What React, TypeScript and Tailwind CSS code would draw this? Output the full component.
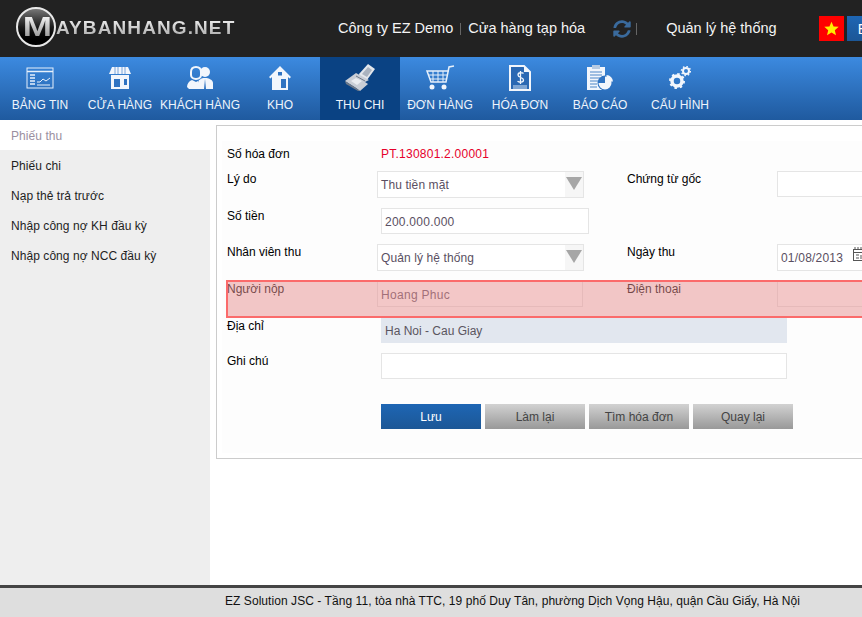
import { FaSyncAlt } from "react-icons/fa";

const menu = [
  { label: "BẢNG TIN", icon: <DashIcon /> },
  { label: "CỬA HÀNG", icon: <StoreIcon /> },
  { label: "KHÁCH HÀNG", icon: <UsersIcon /> },
  { label: "KHO", icon: <HomeIcon /> },
  { label: "THU CHI", icon: <MoneyIcon />, active: true },
  { label: "ĐƠN HÀNG", icon: <CartIcon /> },
  { label: "HÓA ĐƠN", icon: <InvoiceIcon /> },
  { label: "BÁO CÁO", icon: <ReportIcon /> },
  { label: "CẤU HÌNH", icon: <GearsIcon /> },
];

const sideItems = ["Phiếu chi", "Nạp thẻ trả trước", "Nhập công nợ KH đầu kỳ", "Nhập công nợ NCC đầu kỳ"];

function DashIcon() {
  return (
    <svg width="28" height="22" viewBox="0 0 28 22" fill="none" stroke="#e6f0fb">
      <rect x="1" y="1" width="26" height="20" strokeWidth="1" />
      <path d="M1 4.500h26" strokeWidth="1.500" />
      <path d="M4 8h5M4 11h5M4 14h5M4 17h5" strokeWidth="1.500" />
      <path d="M11 15h3l3-3 3 2 4-3" strokeWidth="1" />
      <path d="M11 18h13" strokeWidth="1" />
    </svg>
  );
}

function StoreIcon() {
  return (
    <svg width="22" height="22" viewBox="0 0 22 22" fill="#f2f6fc">
      <path d="M3 0h16l3 7H0z" />
      <path d="M6 0v7M9 0v7M13 0v7M16 0v7" stroke="#5b93d3" strokeWidth="0.800" />
      <path d="M2 8h18v14H2z" />
      <rect x="5" y="12" width="9" height="8" fill="#2f73c2" />
      <rect x="11" y="12" width="3" height="10" fill="#f2f6fc" />
      <rect x="15" y="12" width="3" height="6" fill="#2f73c2" />
    </svg>
  );
}

function UsersIcon() {
  return (
    <svg width="26" height="24" viewBox="0 0 26 24" fill="#f2f6fc">
      <circle cx="18" cy="6" r="5" />
      <path d="M11 23v-6c0-3 3-5 7-5s8 2 8 5v6z" />
      <path d="M18 13l-1 10h2z" fill="#2f73c2" />
      <path d="M4 6c0-3 2-5 5-5s5 2 5 5v3c0 2-2 4-5 4S4 11 4 9z" fill="none" stroke="#f2f6fc" strokeWidth="2" />
      <path d="M0 21c0-3 2-6 5-7l4 2 2-1v8H2z" />
    </svg>
  );
}

function HomeIcon() {
  return (
    <svg width="22" height="24" viewBox="0 0 22 24" fill="#f2f6fc">
      <path d="M11 0L0 11l1.500 1.500L3 11v13h16V11l1.500 1.500L22 11z" />
      <rect x="12" y="13" width="5" height="9" fill="#2f73c2" />
      <rect x="9" y="6" width="4" height="3.500" fill="#2f73c2" />
    </svg>
  );
}

function MoneyIcon() {
  return (
    <svg width="30" height="27" viewBox="0 0 30 27">
      <path d="M14 10L23 0l7 5-8 11-7-2z" fill="#e3e7ec" />
      <path d="M17 10l6-7 4 3-5 7z" fill="#aab3bf" />
      <path d="M0 17L11 9l13 7-4 2 3 2-8 7-4-3z" fill="#c9ced6" />
      <path d="M6 17l5-3 6 3-5 4z" fill="#e9ecf0" />
      <path d="M0 17l11 7 4 3-2 0-12-7z" fill="#6f7a89" />
      <path d="M11 12l9 5" stroke="#6f7a89" strokeWidth="1" />
    </svg>
  );
}

function CartIcon() {
  return (
    <svg width="30" height="26" viewBox="0 0 30 26" fill="none" stroke="#e6f0fb">
      <path d="M29 1l-5 1-3 15H6L2 6h22" strokeWidth="1.500" />
      <path d="M3 10h19M5 14h16M8 6v11M13 6v11M18 6v11" strokeWidth="1" />
      <circle cx="7" cy="22" r="2.500" fill="#f2f6fc" stroke="none" />
      <circle cx="19" cy="22" r="2.500" fill="#f2f6fc" stroke="none" />
    </svg>
  );
}

function InvoiceIcon() {
  return (
    <svg width="22" height="26" viewBox="0 0 22 26" fill="none">
      <path d="M2 1h13l6 6v18H1V1z" stroke="#f2f6fc" strokeWidth="2" fill="#2a68b3" />
      <path d="M15 1v6h6z" fill="#f2f6fc" />
      <path d="M4 21h14M4 23h14" stroke="#e6f0fb" strokeWidth="0.900" />
      <path d="M14.500 8.500c-1-1-5.500-1.500-5.500 1.500s5.500 2 5.500 5-4.500 2.500-6 1.300M11.500 6v13" stroke="#f2f6fc" strokeWidth="1.300" />
    </svg>
  );
}

function ReportIcon() {
  return (
    <svg width="28" height="26" viewBox="0 0 28 26">
      <rect x="1" y="2" width="18" height="23" fill="#f2f6fc" />
      <rect x="6" y="0" width="8" height="4" fill="#b8cbe2" />
      <path d="M4 7h12M4 10h12M4 13h10M4 16h8M4 19h7M4 22h7" stroke="#4d86c7" strokeWidth="1" />
      <circle cx="19" cy="18" r="7.500" fill="#2f73c2" />
      <path d="M19 18v-6.500a6.500 6.500 0 1 1-6.500 6.500z" fill="#f2f6fc" />
      <path d="M20.500 16.500V10a7 7 0 0 1 6.500 6.500z" fill="#f2f6fc" />
    </svg>
  );
}

function GearsIcon() {
  return (
    <svg width="22" height="24" viewBox="0 0 22 24" fill="none" stroke="#f2f6fc">
      <circle cx="8" cy="15" r="5" strokeWidth="3.500" />
      <circle cx="8" cy="15" r="7" strokeWidth="2" strokeDasharray="2.500 3" />
      <circle cx="17" cy="5" r="3" strokeWidth="2" />
      <circle cx="17" cy="5" r="4.500" strokeWidth="1.500" strokeDasharray="1.500 2" />
    </svg>
  );
}

function SelectBox({ value }: { value: string }) {
  return (
    <div className="flex h-[27px] w-[207px] items-center border border-[#e5e5e5] bg-white pl-[3px] tracking-[0.1px] text-[#5a4f62]">
      <span className="flex-1">{value}</span>
      <span className="flex h-full w-[18px] items-start justify-center bg-[#f6f6f6] pt-[5px]">
        <span className="h-0 w-0 border-x-[8px] border-t-[13px] border-x-transparent border-t-[#a6a6a6]" />
      </span>
    </div>
  );
}

function Row({ label, className, children }: { label: string; className?: string; children: React.ReactNode }) {
  return (
    <div className={"flex " + (className ?? "")}>
      <label className="w-[150px] shrink-0 leading-[16px] text-black">{label}</label>
      {children}
    </div>
  );
}

export default function App() {
  return (
    <div className="relative flex h-[617px] w-[862px] flex-col overflow-hidden bg-white font-['Liberation_Sans',Arial,sans-serif] text-xs">
      <header className="flex h-[57px] shrink-0 items-center whitespace-nowrap bg-[#222222]">
        <div className="ml-[16px] flex w-[322px] shrink-0 items-center">
          <div className="mt-[-3px] flex h-[40px] w-[40px] shrink-0 items-center justify-center rounded-full border-2 border-[#e8e8e8] bg-gradient-to-b from-[#777777] via-[#1c1c1c] to-black">
            <span className="translate-x-[1px] scale-x-[1.3] bg-gradient-to-b from-white to-[#8a8a8a] bg-clip-text text-[27px] font-bold leading-none text-transparent">M</span>
          </div>
          <span className="mt-[-2px] bg-gradient-to-b from-white to-[#a0a0a0] bg-clip-text text-[19px] font-bold tracking-[1.1px] text-transparent">AYBANHANG.NET</span>
        </div>
        <span className="shrink-0 text-[14.5px] text-[#f4f4f4]">Công ty EZ Demo</span>
        <span className="mx-[7px] h-[12px] w-px shrink-0 bg-[#666666]" />
        <span className="shrink-0 text-[14.5px] text-[#f4f4f4]">Cửa hàng tạp hóa</span>
        <FaSyncAlt className="ml-[28px] shrink-0 text-[18px] text-[#3a6a9c]" />
        <span className="ml-[5px] h-[12px] w-px shrink-0 bg-[#666666]" />
        <span className="ml-[29px] shrink-0 text-[14.5px] text-[#f4f4f4]">Quản lý hệ thống</span>
        <div className="ml-[42px] flex h-[25px] w-[25px] shrink-0 items-center justify-center bg-[#ff0000]">
          <svg width="15" height="15" viewBox="0 0 24 24"><path d="M12 1l3.300 7.600 8.200.7-6.200 5.400 1.900 8L12 18.500 4.800 22.700l1.900-8L.5 9.300l8.200-.7z" fill="#ffee00" /></svg>
        </div>
        <div className="ml-[3px] flex h-[25px] w-[40px] shrink-0 items-center bg-gradient-to-b from-[#1e66b4] to-[#1c5796] pl-[11px] text-sm text-white">EN</div>
      </header>

      <nav className="flex h-[63px] shrink-0 bg-gradient-to-b from-[#3c8ae0] to-[#1f5a9f]">
        {menu.map((m) => (
          <div key={m.label} className={"flex w-[80px] shrink-0 flex-col items-center pt-[7px] " + (m.active ? "bg-[#0a4283]" : "")}>
            <div className="flex h-[27px] items-center">{m.icon}</div>
            <span className="mt-[6px] whitespace-nowrap text-xs text-[#eef4fb]">{m.label}</span>
          </div>
        ))}
      </nav>

      <main className="flex min-h-0 flex-1">
        <aside className="w-[210px] shrink-0 bg-[#eeeeee] tracking-[0.06px]">
          <div className="flex h-[30px] items-center bg-white pl-[11px] pt-px text-[#9a8f9f]">Phiếu thu</div>
          {sideItems.map((s) => (
            <div key={s} className="flex h-[30px] items-center pl-[11px] pt-px text-[#1e1e1e]">{s}</div>
          ))}
        </aside>
        <section className="ml-[6px] mt-[5px] h-[334px] w-[700px] shrink-0 border border-[#cccccc] bg-white pb-[5px] pl-[5px] pt-[15px]">
          <div className="h-full bg-[#fdfdfd] pl-[5px]">
            <div className="mb-[4px] flex h-[26px] items-center text-black">
              <label className="w-[154px] shrink-0">Số hóa đơn</label>
              <span className="tracking-[0.24px] text-[#e6002b]">PT.130801.2.00001</span>
            </div>
            <Row label="Lý do" className="h-[37px]">
              <div className="flex">
                <SelectBox value="Thu tiền mặt" />
                <label className="ml-[43px] w-[150px] shrink-0 leading-[16px] text-black">Chứng từ gốc</label>
                <div className="h-[26px] w-[100px] shrink-0 border border-[#e5e5e5] bg-white" />
              </div>
            </Row>
            <Row label="Số tiền" className="h-[36px]">
              <div className="ml-[4px] flex h-[26px] w-[208px] items-center border border-[#e5e5e5] bg-white pl-[3px] pt-[2px] tracking-[0.25px] text-[#5a4f62]">200.000.000</div>
            </Row>
            <Row label="Nhân viên thu" className="h-[37px]">
              <div className="flex">
                <SelectBox value="Quản lý hệ thống" />
                <label className="ml-[43px] w-[150px] shrink-0 leading-[16px] text-black">Ngày thu</label>
                <div className="flex h-[27px] w-[100px] shrink-0 items-center border border-[#e5e5e5] bg-white pl-[3px] tracking-[0.2px] text-[#5a4f62]">
                  01/08/2013
                  <svg className="ml-[10px] mt-[-7px] shrink-0" width="13" height="14" viewBox="0 0 13 14" fill="none" stroke="#555555">
                    <rect x="0.500" y="2.500" width="12" height="11" />
                    <path d="M2 0v3M5 0v3M8 0v3M11 0v3M0 5.500h13M3 8h3M3 11h3M8 8v4" />
                  </svg>
                </div>
              </div>
            </Row>
            <Row label="Người nộp" className="h-[37px]">
              <div className="flex">
                <div className="flex h-[26px] w-[206px] items-center border border-[#e5e5e5] bg-white pl-[3px] pt-[2px] tracking-[0.3px] text-[#5a4f62]">Hoang Phuc</div>
                <label className="ml-[44px] w-[150px] shrink-0 leading-[16px] text-black">Điện thoại</label>
                <div className="h-[26px] w-[100px] shrink-0 border border-[#e5e5e5] bg-white" />
              </div>
            </Row>
            <Row label="Địa chỉ" className="h-[35px]">
              <div className="ml-[4px] flex h-[25px] w-[406px] items-center bg-[#e2e7ef] pl-[4px] text-[#5a5560]">Ha Noi - Cau Giay</div>
            </Row>
            <Row label="Ghi chú" className="h-[51px]">
              <div className="ml-[4px] h-[26px] w-[406px] border border-[#e5e5e5] bg-white" />
            </Row>
            <div className="ml-[154px] flex gap-[4px]">
              <button className="h-[25px] w-[100px] bg-gradient-to-b from-[#1e66b4] to-[#1c5796] text-white">Lưu</button>
              <button className="h-[25px] w-[100px] bg-gradient-to-b from-[#d2d2d2] to-[#999999] text-[#444444]">Làm lại</button>
              <button className="h-[25px] w-[100px] bg-gradient-to-b from-[#d2d2d2] to-[#999999] text-[#444444]">Tìm hóa đơn</button>
              <button className="h-[25px] w-[100px] bg-gradient-to-b from-[#d2d2d2] to-[#999999] text-[#444444]">Quay lại</button>
            </div>
          </div>
        </section>
      </main>

      <footer className="h-[32px] shrink-0 border-t-[3px] border-[#444444] bg-[#dedede] pl-[225px] pt-[5px] tracking-[0.06px] text-[#111111]">
        EZ Solution JSC - Tầng 11, tòa nhà TTC, 19 phố Duy Tân, phường Dịch Vọng Hậu, quận Cầu Giấy, Hà Nội
      </footer>

      {/* thanh báo lỗi đè lên form */}
      <div className="absolute left-[226px] top-[280px] h-[38px] w-[660px] border-2 border-[#fb6b6b] bg-[#e89090]/50" />
    </div>
  );
}
